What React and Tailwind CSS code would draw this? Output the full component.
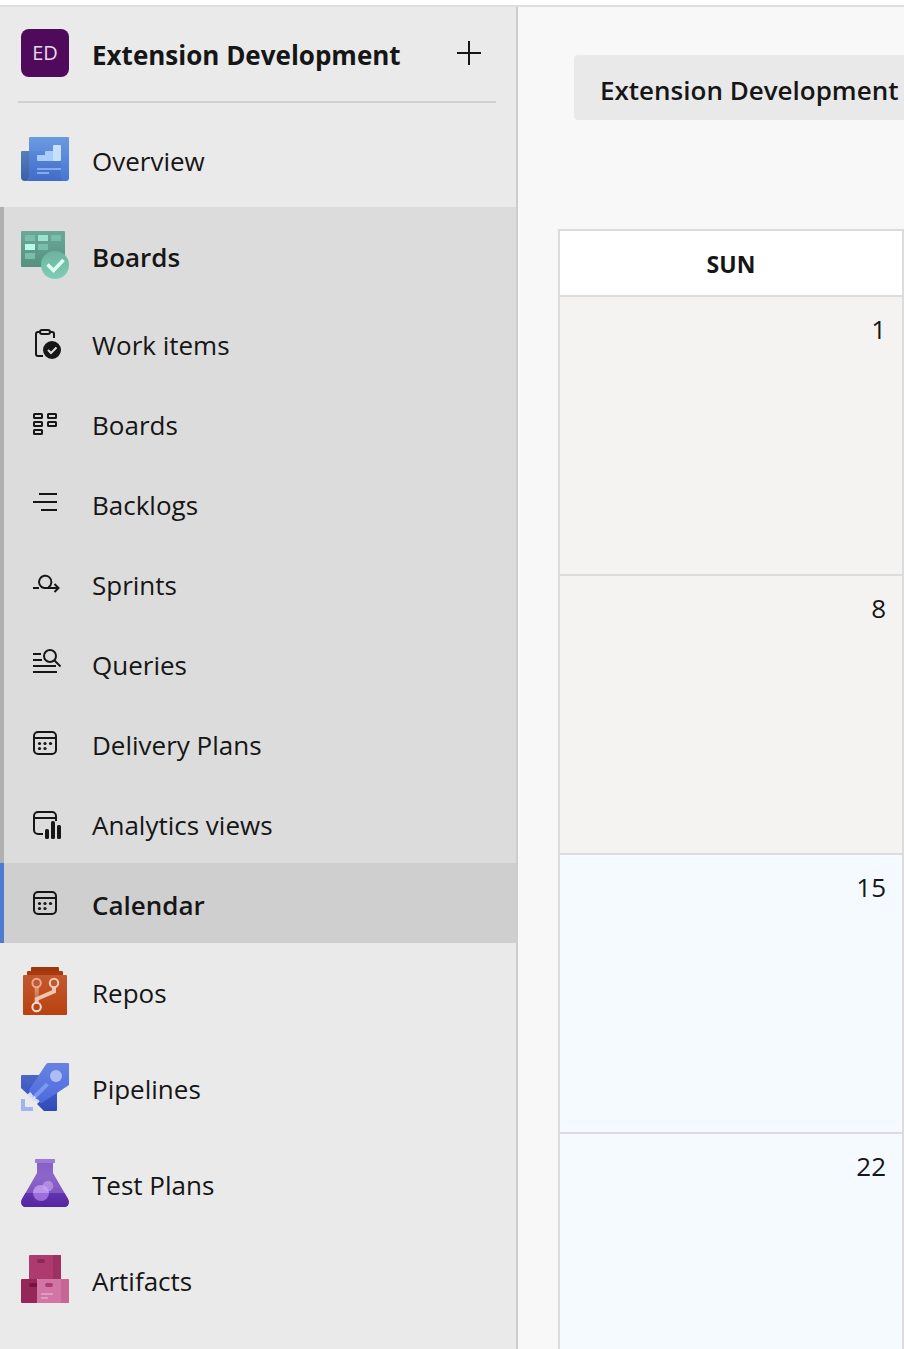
import { clsx } from 'clsx';

function Svg({ children, className }) {
    return (
        <svg
            viewBox="0 0 48 48"
            fill="none"
            aria-hidden="true"
            className={clsx('size-12 shrink-0', className)}
        >
            {children}
        </svg>
    );
}

function LineIcon({ children }) {
    return (
        <Svg className="stroke-[#161616] stroke-2">
            {children}
        </Svg>
    );
}

function OverviewIcon() {
    return (
        <Svg>
            <defs>
                <linearGradient id="ov-page" x1="0" y1="0" x2="0" y2="1">
                    <stop stopColor="#6a9ae0" />
                    <stop offset="1" stopColor="#4676d3" />
                </linearGradient>
                <linearGradient id="ov-back" x1="0" y1="0" x2="0" y2="1">
                    <stop stopColor="#5580bb" />
                    <stop offset="1" stopColor="#3a5fa8" />
                </linearGradient>
                <linearGradient id="ov-shade" x1="0" y1="0" x2="0" y2="1">
                    <stop stopColor="#5b88d6" />
                    <stop offset="1" stopColor="#426bc7" />
                </linearGradient>
            </defs>
            <path d="M9 2h38a1 1 0 0 1 1 1v40a3 3 0 0 1-3 3H8V3a1 1 0 0 1 1-1z" fill="url(#ov-page)" />
            <path d="M8 16h32v27a3 3 0 0 0 3 3H4c3 0 4-2 4-4z" fill="url(#ov-shade)" />
            <path d="M1 16h7v26a4 4 0 0 1-8 0V17a1 1 0 0 1 1-1z" fill="url(#ov-back)" />
            <path d="M17 20h7v-3a1 1 0 0 1 1-1h7v10H17a1 1 0 0 1-1-1v-4a1 1 0 0 1 1-1z" fill="#a9ccf8" />
            <path d="M33 10h6a1 1 0 0 1 1 1v14a1 1 0 0 1-1 1h-7V11a1 1 0 0 1 1-1z" fill="#c8e0fd" />
            <path d="M16 33h24v2H16zM16 37h12v2H16z" fill="#82aaf0" />
        </Svg>
    );
}

function BoardsIcon() {
    return (
        <Svg>
            <defs>
                <linearGradient id="bd-panel" x1="0" y1="0" x2="0" y2="1">
                    <stop stopColor="#6ea797" />
                    <stop offset="1" stopColor="#55917f" />
                </linearGradient>
                <linearGradient id="bd-circle" x1="0" y1="0" x2="0" y2="1">
                    <stop stopColor="#6db39f" />
                    <stop offset="1" stopColor="#7fcdb5" />
                </linearGradient>
            </defs>
            <rect width="44" height="36" rx="1" fill="url(#bd-panel)" />
            <path d="M4 4h10v6H4zM30 4h10v6H30zM17 13h10v6H17zM4 22h10v6H4z" fill="#78bfaa" />
            <path d="M17 4h10v6H17z" fill="#9be3cf" />
            <path d="M4 13h10v6H4z" fill="#b7fbe8" />
            <circle cx="34" cy="34" r="14" fill="url(#bd-circle)" />
            <path d="m26.5 33.5 6 6L42.5 29" stroke="#e0fff5" strokeWidth="3.5" />
        </Svg>
    );
}

function WorkItemsIcon() {
    return (
        <LineIcon>
            <path d="M22 37h-5a2 2 0 0 1-2-2V15a2 2 0 0 1 2-2h2M29 13h2a2 2 0 0 1 2 2v4" />
            <rect x="19" y="11" width="10" height="4" rx="2" />
            <circle cx="31" cy="31" r="8" fill="#161616" />
            <path d="m27 31 3 3 5.5-5.5" className="stroke-[#dcdcdc]" />
        </LineIcon>
    );
}

function BoardGridIcon() {
    return (
        <LineIcon>
            <rect x="13" y="15" width="8" height="4" rx="0.5" />
            <rect x="13" y="23" width="8" height="4" rx="0.5" />
            <rect x="13" y="31" width="8" height="4" rx="0.5" />
            <rect x="27" y="15" width="8" height="4" rx="0.5" />
            <rect x="27" y="23" width="8" height="4" rx="0.5" />
        </LineIcon>
    );
}

function BacklogsIcon() {
    return (
        <LineIcon>
            <path d="M18 15h18M12 23h24M20 31h16" />
        </LineIcon>
    );
}

function SprintsIcon() {
    return (
        <LineIcon>
            <path d="M12 29h6M27.5 28.2a6.200 6.200 0 1 0-4.500.8h14.500M33.500 25l4 4-4 4" />
        </LineIcon>
    );
}

function QueriesIcon() {
    return (
        <LineIcon>
            <path d="M12 15h8M12 21h9M12 27h23M12 33h24" />
            <circle cx="29" cy="17" r="6" />
            <path d="M33.500 21.500 39.500 27.500" />
        </LineIcon>
    );
}

function CalendarIcon() {
    return (
        <LineIcon>
            <rect x="13" y="13" width="22" height="22" rx="4" />
            <path d="M13 19h22" />
            <g className="fill-[#161616] stroke-none">
                <circle cx="18.500" cy="24.500" r="1.600" />
                <circle cx="24" cy="24.500" r="1.600" />
                <circle cx="29.500" cy="24.500" r="1.600" />
                <circle cx="18.500" cy="29.500" r="1.600" />
                <circle cx="24" cy="29.500" r="1.600" />
            </g>
        </LineIcon>
    );
}

function AnalyticsIcon() {
    return (
        <LineIcon>
            <path d="M22 35h-5a4 4 0 0 1-4-4V17a4 4 0 0 1 4-4h14a4 4 0 0 1 4 4v5M13 19h22" />
            <g className="fill-[#161616] stroke-none">
                <rect x="24" y="30" width="4" height="10" rx="1.500" />
                <rect x="30" y="22" width="4" height="18" rx="1.500" />
                <rect x="36" y="26" width="4" height="14" rx="1.500" />
            </g>
        </LineIcon>
    );
}

function ReposIcon() {
    return (
        <Svg>
            <defs>
                <linearGradient id="rp-box" x1="0" y1="0" x2="0" y2="1">
                    <stop stopColor="#c2592f" />
                    <stop offset="1" stopColor="#ba4210" />
                </linearGradient>
                <linearGradient id="rp-line" x1="0" y1="20" x2="0" y2="34" gradientUnits="userSpaceOnUse">
                    <stop stopColor="#dd9878" />
                    <stop offset="1" stopColor="#c9683f" />
                </linearGradient>
            </defs>
            <path d="M11 0h26a1 1 0 0 1 1 1v3H10V1a1 1 0 0 1 1-1z" fill="#9c370d" />
            <path d="M7 4h34a1 1 0 0 1 1 1v3H6V5a1 1 0 0 1 1-1z" fill="#a93a0d" />
            <rect x="2" y="8" width="44" height="40" rx="1" fill="url(#rp-box)" />
            <path d="M13.700 20h4v12h-4z" fill="url(#rp-line)" />
            <path d="M33 20v4.500L15.700 32v4" stroke="#f0c4ae" strokeWidth="4" />
            <circle cx="15.600" cy="16" r="4.200" fill="#bd5a33" stroke="#e8aa8b" strokeWidth="2" />
            <circle cx="33" cy="16" r="4.200" fill="#bd5a33" stroke="#f5cdb9" strokeWidth="2" />
            <circle cx="15.600" cy="40" r="4.200" fill="#ba4515" stroke="#ffe1d3" strokeWidth="2" />
        </Svg>
    );
}

function PipelinesIcon() {
    return (
        <Svg>
            <defs>
                <linearGradient id="pl-body" x1="0" y1="0" x2="0" y2="1">
                    <stop stopColor="#6683e3" />
                    <stop offset="1" stopColor="#4d6ade" />
                </linearGradient>
                <linearGradient id="pl-fin" x1="0" y1="12" x2="0" y2="48" gradientUnits="userSpaceOnUse">
                    <stop stopColor="#4c67c8" />
                    <stop offset="1" stopColor="#3049b8" />
                </linearGradient>
            </defs>
            <path d="M1 12h17v10L7 31.500 0 25V13a1 1 0 0 1 1-1z" fill="url(#pl-fin)" />
            <path d="M36 28v19a1 1 0 0 1-1 1H23l-7-7 6-7z" fill="url(#pl-fin)" />
            <path d="M27 0h20a1 1 0 0 1 1 1v21L20 40.500 7.500 28 24.500 2Q25.500 0 27 0z" fill="url(#pl-body)" />
            <path d="m12 35.500 14.500-14.500" stroke="#7d97ee" strokeWidth="4" />
            <path d="M7 31l2-2 2 2 0 2.500 3-.5 1 3.500 2.500 0 1 2-2 2-1.500-2.500-3 .5-1-3-3-1z" fill="#d5defa" />
            <circle cx="35" cy="13" r="6" fill="#aebef4" />
            <path d="M0 36h4v8h8v4H0z" fill="#a2b4f0" />
        </Svg>
    );
}

function TestPlansIcon() {
    return (
        <Svg>
            <defs>
                <linearGradient id="tp-glass" x1="0" y1="0" x2="0" y2="1">
                    <stop stopColor="#8560c4" />
                    <stop offset="0.350" stopColor="#8d66ca" />
                    <stop offset="1" stopColor="#7346b9" />
                </linearGradient>
                <linearGradient id="tp-liquid" x1="0" y1="0" x2="0" y2="1">
                    <stop stopColor="#6334b0" />
                    <stop offset="1" stopColor="#53259f" />
                </linearGradient>
            </defs>
            <path d="M16 2h16v12l15 26c2 4 0 8-4 8H5c-4 0-6-4-4-8l15-26z" fill="url(#tp-glass)" />
            <path d="M4.500 34h39L47 40c2 4 0 8-4 8H5c-4 0-6-4-4-8z" fill="url(#tp-liquid)" />
            <rect x="14" width="20" height="4" rx="0.500" fill="#9c7bd8" />
            <circle cx="20" cy="34" r="8" fill="#b488f0" opacity="0.700" />
            <path d="M12 34a8 8 0 0 1 16 0z" fill="#d2b6f3" opacity="0.450" />
            <circle cx="27" cy="27" r="5.300" fill="#caaaf0" opacity="0.600" />
        </Svg>
    );
}

function ArtifactsIcon() {
    return (
        <Svg>
            <path d="M9 0h30a1 1 0 0 1 1 1v23H8V1a1 1 0 0 1 1-1z" fill="#ae3b70" />
            <path d="M32 0h7a1 1 0 0 1 1 1v23h-8z" fill="#9f3162" />
            <rect x="16" y="4" width="8" height="4" rx="2" fill="#8d2856" />
            <path d="M1 24h15v24H1a1 1 0 0 1-1-1V25a1 1 0 0 1 1-1z" fill="#96255a" />
            <path d="M10 28h6v4h-6a2 2 0 0 1 0-4z" fill="#731541" />
            <rect x="16" y="24" width="32" height="24" rx="1" fill="#d176a4" />
            <path d="M40 24h7a1 1 0 0 1 1 1v22a1 1 0 0 1-1 1h-7z" fill="#c76594" />
            <rect x="24" y="28" width="8" height="4" rx="2" fill="#ae3b70" />
            <path d="M20 38h12v2H20zM20 42h7v2h-7z" fill="#e29bc0" />
        </Svg>
    );
}

const boardLinks = [
    { label: 'Work items', Icon: WorkItemsIcon },
    { label: 'Boards', Icon: BoardGridIcon },
    { label: 'Backlogs', Icon: BacklogsIcon },
    { label: 'Sprints', Icon: SprintsIcon },
    { label: 'Queries', Icon: QueriesIcon },
    { label: 'Delivery Plans', Icon: CalendarIcon },
    { label: 'Analytics views', Icon: AnalyticsIcon },
    { label: 'Calendar', Icon: CalendarIcon, active: true }
];

const serviceLinks = [
    { label: 'Repos', Icon: ReposIcon },
    { label: 'Pipelines', Icon: PipelinesIcon },
    { label: 'Test Plans', Icon: TestPlansIcon },
    { label: 'Artifacts', Icon: ArtifactsIcon }
];

const weeks = [
    { sunday: 1 },
    { sunday: 8 },
    { sunday: 15, current: true },
    { sunday: 22, current: true }
];

function NavLink({ label, Icon, className }) {
    return (
        <a
            href="#"
            className={clsx(
                'flex items-center gap-[23px] border-l-4 pr-5 pl-[17px]',
                className
            )}
        >
            <Icon />
            <span className="pt-1">{label}</span>
        </a>
    );
}

function Sidebar() {
    return (
        <aside className="w-[518px] shrink-0 border-r-2 border-[#cdcdcd] bg-[#eaeaea]">
            <header className="mr-5 ml-[18px] flex h-24 items-center border-b-2 border-[#d0d0d0] pr-[11px] pb-0.5 pl-[3px]">
                <span className="flex size-12 items-center justify-center rounded-lg bg-[#4f0a5b] text-xl text-[#e6d9e8]">
                    ED
                </span>
                <h1 className="ml-[23px] flex-1 pt-1 font-bold whitespace-nowrap">
                    Extension Development
                </h1>
                <button type="button" aria-label="New">
                    <svg
                        viewBox="0 0 32 32"
                        className="size-8 stroke-[#161616] stroke-2"
                    >
                        <path d="M4 16h24M16 4v24" />
                    </svg>
                </button>
            </header>
            <nav className="pt-2">
                <NavLink
                    label="Overview"
                    Icon={OverviewIcon}
                    className="h-24 border-transparent"
                />
                <div className="bg-[#dcdcdc]">
                    <NavLink
                        label="Boards"
                        Icon={BoardsIcon}
                        className="h-24 border-[#b0b0b0] font-semibold"
                    />
                    {boardLinks.map(({ label, Icon, active }) => (
                        <NavLink
                            key={label}
                            label={label}
                            Icon={Icon}
                            className={clsx(
                                'h-20',
                                active
                                    ? 'border-[#4e7ad1] bg-[#cfcfcf] font-semibold'
                                    : 'border-[#b0b0b0]'
                            )}
                        />
                    ))}
                </div>
                {serviceLinks.map(({ label, Icon }) => (
                    <NavLink
                        key={label}
                        label={label}
                        Icon={Icon}
                        className="h-24 border-transparent"
                    />
                ))}
            </nav>
        </aside>
    );
}

function CalendarPage() {
    return (
        <main className="min-w-0 flex-1 overflow-hidden bg-[#f8f8f8] pt-12 pl-10">
            <button
                type="button"
                className="ml-4 flex h-[65px] items-center rounded bg-[#e9e9e9] px-[26px] pt-1 font-semibold whitespace-nowrap"
            >
                Extension Development
            </button>
            <table className="mt-[109px] w-full border-separate border-spacing-0 border-2 border-b-0 border-[#dcdcdc]">
                <thead>
                    <tr>
                        <th className="h-[66px] border-b-2 border-[#dcdcdc] bg-white pt-0.5 text-[23px] font-bold">
                            SUN
                        </th>
                    </tr>
                </thead>
                <tbody>
                    {weeks.map(({ sunday, current }) => (
                        <tr key={sunday}>
                            <td
                                className={clsx(
                                    'h-[279px] border-b-2 border-[#dcdcdc] px-4 pt-3 text-right align-top',
                                    current ? 'bg-[#f4faff]' : 'bg-[#f4f3f1]'
                                )}
                            >
                                {sunday}
                            </td>
                        </tr>
                    ))}
                </tbody>
            </table>
        </main>
    );
}

export default function App() {
    return (
        <div className="flex h-screen flex-col overflow-hidden bg-white pt-[5px] font-['Segoe_UI','Open_Sans',sans-serif] text-[26px] leading-10 text-[#161616]">
            <div className="flex min-h-0 flex-1 border-t-2 border-[#dedede]">
                <Sidebar />
                <CalendarPage />
            </div>
        </div>
    );
}
